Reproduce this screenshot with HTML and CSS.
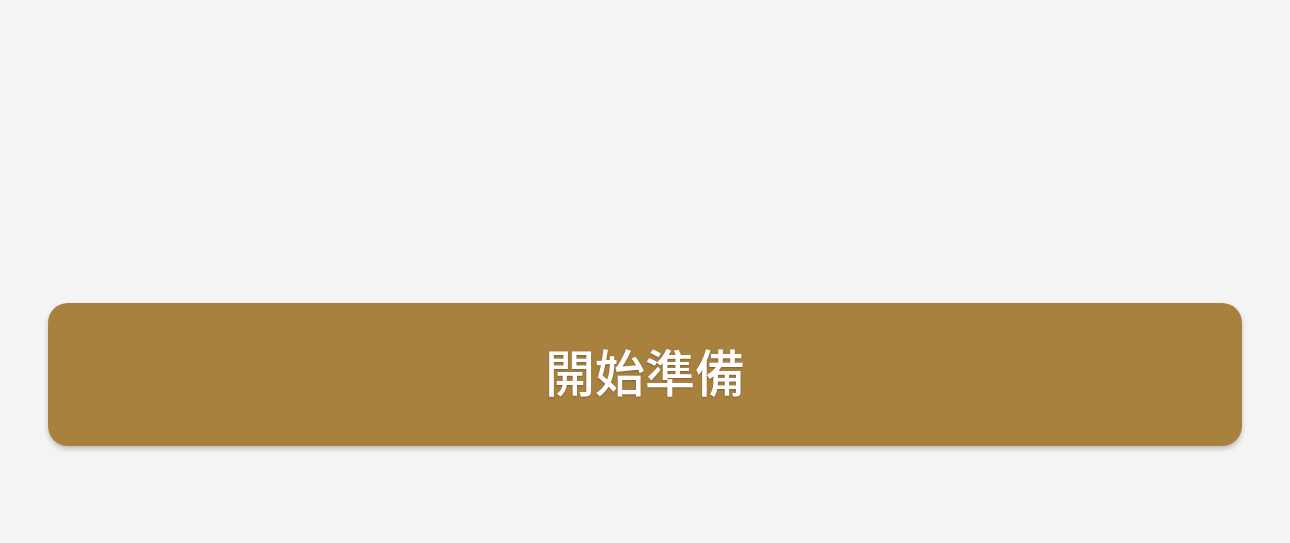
FILE: index.html
```html
<!DOCTYPE html>
<html lang="zh-Hant">
<head>
<meta charset="utf-8">
<link rel="stylesheet" href="styles.css">
</head>
<body>
<main class="page">
  <button class="start-btn">開始準備</button>
</main>
</body>
</html>
```
FILE: styles.css
```css
html, body {
  margin: 0;
  padding: 0;
  background: #f4f4f4;
}
.page {
  box-sizing: border-box;
  height: 543px;
  padding: 303px 48px 0 48px;
  display: flex;
  flex-direction: column;
}
.start-btn {
  width: 100%;
  height: 143px;
  border: none;
  border-radius: 20px;
  background: #a9813f;
  color: #ffffff;
  font-family: "Noto Sans CJK TC", "Noto Sans CJK SC", sans-serif;
  font-weight: 500;
  font-size: 50px;
  line-height: 1;
  box-shadow: 0 3px 5px rgba(0, 0, 0, 0.22);
  text-shadow: 0 1px 2px rgba(0, 0, 0, 0.25);
  padding: 0 0 9px 0;
  cursor: pointer;
}
```
